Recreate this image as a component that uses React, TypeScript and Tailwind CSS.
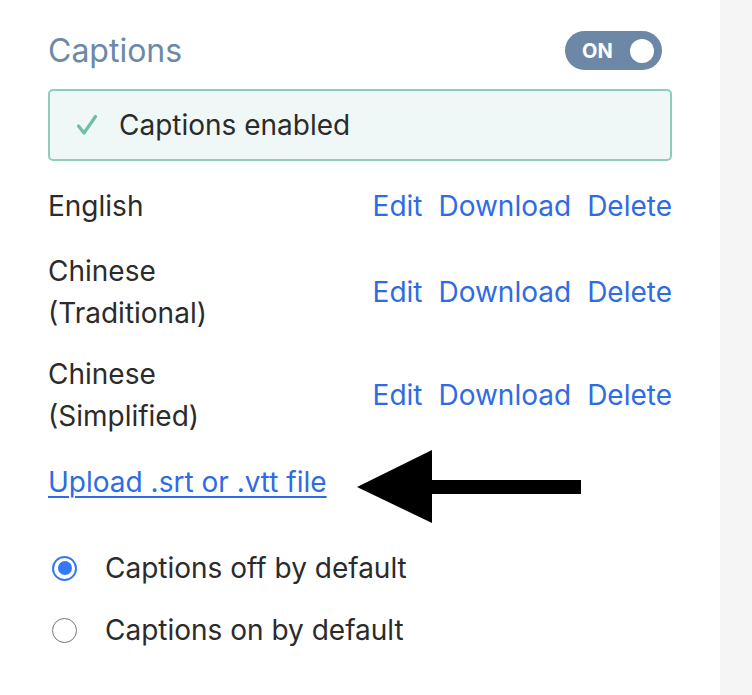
import React from "react";

function Row({ lines, mt }: { lines: string[]; mt: string }) {
  return (
    <div className={`flex items-center justify-between ${mt}`}>
      <div className="flex flex-col text-[28px] leading-[42px] text-[#2b2b2b]">
        {lines.map((l) => (
          <span key={l}>{l}</span>
        ))}
      </div>
      <div className="flex items-center gap-[16px] text-[28px] leading-[42px] text-[#2f6be3]">
        <span>Edit</span>
        <span>Download</span>
        <span>Delete</span>
      </div>
    </div>
  );
}

export default function App() {
  return (
    <div className="flex min-h-[695px] w-full font-['Inter',sans-serif]">
      <div className="w-[720px] bg-white px-[48px]">
        <div className="mt-[31px] flex h-[39px] items-center justify-between">
          <span className="text-[32px] leading-none text-[#6c89a8]">Captions</span>
          <div className="mr-[10px] flex h-[39px] w-[97px] items-center justify-between rounded-full bg-[#6c88a6] pl-[17px] pr-[8px]">
            <span className="text-[20px] font-bold leading-none text-white">ON</span>
            <span className="h-[24px] w-[24px] rounded-full bg-white" />
          </div>
        </div>

        <div className="mt-[19px] flex h-[72px] items-center rounded-[5px] border-2 border-[#8fccbc] bg-[#eff8f6] pl-[26px]">
          <svg width="22" height="22" viewBox="0 0 22 22" className="mr-[21px]">
            <path d="M2.5 12 L8 19 L19.5 2.5" fill="none" stroke="#6dbfa8" strokeWidth="3.2" strokeLinecap="round" strokeLinejoin="round" />
          </svg>
          <span className="text-[28px] text-[#2b2b2b]">Captions enabled</span>
        </div>

        <Row lines={["English"]} mt="mt-[24px]" />
        <Row lines={["Chinese", "(Traditional)"]} mt="mt-[23px]" />
        <Row lines={["Chinese", "(Simplified)"]} mt="mt-[19px]" />

        <div className="relative mt-[24px] flex items-center">
          <span className="text-[28px] leading-[42px] text-[#2f6be3] underline decoration-[2px] underline-offset-[4px]">
            Upload .srt or .vtt file
          </span>
          <svg width="224" height="73" viewBox="0 0 224 73" className="absolute left-[309px] top-[-11px]">
            <path d="M0 37 L75 0 L75 30 L224 30 L224 44 L75 44 L75 73 Z" fill="#000" />
          </svg>
        </div>

        <div className="mt-[44px] flex flex-col gap-[20px]">
          <label className="flex items-center">
            <span className="ml-[4px] flex h-[25px] w-[25px] items-center justify-center rounded-full border-[2.5px] border-[#3478f6]">
              <span className="h-[14px] w-[14px] rounded-full bg-[#3478f6]" />
            </span>
            <span className="ml-[28px] text-[28px] leading-[42px] text-[#2b2b2b]">Captions off by default</span>
          </label>
          <label className="flex items-center">
            <span className="ml-[4px] h-[25px] w-[25px] rounded-full border-[1.5px] border-[#767676]" />
            <span className="ml-[28px] text-[28px] leading-[42px] text-[#2b2b2b]">Captions on by default</span>
          </label>
        </div>
      </div>
      <div className="flex-1 bg-[#f5f5f5]" />
    </div>
  );
}
